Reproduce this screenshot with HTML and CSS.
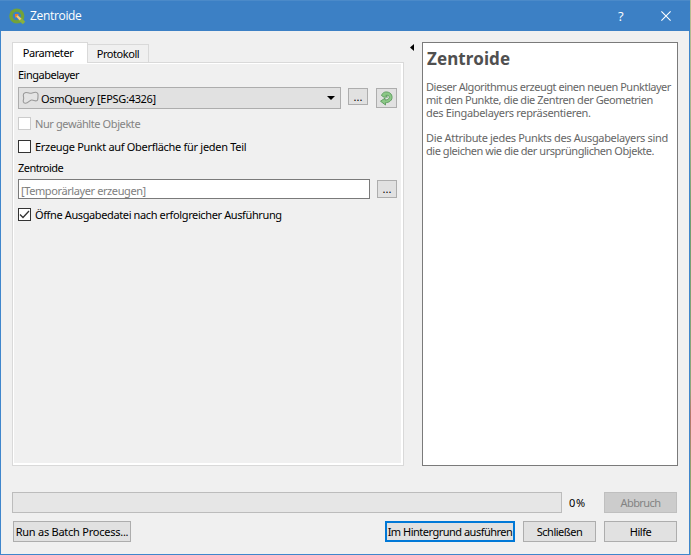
FILE: index.html
```html
<!DOCTYPE html>
<html lang="de">
<head>
<meta charset="utf-8">
<title>Zentroide</title>
<link rel="stylesheet" href="styles.css">
</head>
<body>
<div class="window">
  <header class="titlebar">
    <svg class="logo" width="17" height="17" viewBox="0 0 17 17">
      <circle cx="7.800" cy="8" r="5.900" fill="none" stroke="#72a23a" stroke-width="3.400"/>
      <path d="M10.500 10.500l4.500 4.500" stroke="#8ab13c" stroke-width="3.600"/>
      <path d="M7.500 7.500l4 4" stroke="#f3c77c" stroke-width="2.400"/>
      <path d="M6 6h4l-4 4z" fill="#ee7f22"/>
    </svg>
    <h1 class="caption">Zentroide</h1>
    <span class="question">?</span>
    <svg class="close" width="10" height="10" viewBox="0 0 10 10"><path d="M.4.4l9.2 9.2M9.6.4L.4 9.6" stroke="#fff" stroke-width="1.1"/></svg>
  </header>
  <main class="content">
    <section class="left">
      <nav class="tabs">
        <div class="tab active"><span class="t-param">Parameter</span></div>
        <div class="tab"><span class="t-prot">Protokoll</span></div>
      </nav>
      <div class="panel">
        <div class="label"><span class="t-input">Eingabelayer</span></div>
        <div class="row">
          <div class="combo">
            <svg width="17" height="14" viewBox="0 0 17 14"><path d="M3 1.800C4.500.800 6 2.300 8 2.300S12 1.200 13.500 1.300C15.800 1.500 16.300 3 16 5 15.800 7 16.300 9.300 14.500 9.800 12.500 10.200 11.500 8.700 9.500 9 7.500 9.300 6 12.500 3.300 12.200 1 12 1 10 1.500 8.500 2 7 1.500 6 1.300 4.500 1.200 3.300 1.800 2.300 3 1.800z" fill="#e4e4e4" stroke="#999" stroke-width="1.100"/></svg>
            <span class="t-combo">OsmQuery [EPSG:4326]</span>
            <svg class="arrow" width="8" height="4" viewBox="0 0 8 4"><path d="M0 0h8L4 4z"/></svg>
          </div>
          <div class="btn dots small">...</div>
          <div class="btn refresh">
            <svg width="15" height="16" viewBox="0 0 15 16"><path d="M2.500 5.500C3.500 2.300 6.500 1.300 9.500 2.300 13.500 3.600 14.200 8.800 11.300 11 10 12.200 8 12.700 6.500 12.700V15L1.500 11.200 6 8.200V10C8 10 10 9.300 10.300 7.500 10.500 5.500 8.500 4.800 6.800 5.500L8.500 7 5 7.200z" fill="#8cc886" stroke="#5a9a5c" stroke-width=".9"/></svg>
          </div>
        </div>
        <div class="check off"><i class="box"></i><span class="t-only">Nur gewählte Objekte</span></div>
        <div class="check second"><i class="box"></i><span class="t-point">Erzeuge Punkt auf Oberfläche für jeden Teil</span></div>
        <div class="label out"><span class="t-out">Zentroide</span></div>
        <div class="row">
          <div class="edit"><span class="t-edit">[Temporärlayer erzeugen]</span></div>
          <div class="btn dots">...</div>
        </div>
        <div class="check third"><i class="box"><svg width="11" height="11" viewBox="0 0 11 11"><path d="M1 5.500l3 3L10 2" fill="none" stroke="#333" stroke-width="1.3"/></svg></i><span class="t-open">Öffne Ausgabedatei nach erfolgreicher Ausführung</span></div>
      </div>
    </section>
    <div class="splitter"><svg width="4" height="7" viewBox="0 0 4 7"><path d="M4 0v7L0 3.500z"/></svg></div>
    <aside class="help">
      <h2><span class="t-head">Zentroide</span></h2>
      <p><span class="h1">Dieser Algorithmus erzeugt einen neuen Punktlayer</span><span class="h2">mit den Punkte, die die Zentren der Geometrien</span><span class="h3">des Eingabelayers repräsentieren.</span></p>
      <p><span class="h4">Die Attribute jedes Punkts des Ausgabelayers sind</span><span class="h5">die gleichen wie die der ursprünglichen Objekte.</span></p>
    </aside>
  </main>
  <div class="progress">
    <div class="bar"></div><span class="percent">0%</span>
    <div class="btn std disabled"><span class="t-abort">Abbruch</span></div>
  </div>
  <footer class="actions">
    <div class="btn batch"><span class="t-batch">Run as Batch Process...</span></div>
    <div class="btn primary"><span class="t-run">Im Hintergrund ausführen</span></div>
    <div class="btn std"><span class="t-close">Schließen</span></div>
    <div class="btn std"><span class="t-help">Hilfe</span></div>
  </footer>
</div>
</body>
</html>
```
FILE: styles.css
```css
* { box-sizing: border-box; }
body { margin: 0; width: 691px; height: 555px; overflow: hidden; background: linear-gradient(#b9bd92, #a8b58c 20%, #729d70 40%, #8fa77c 70%, #b87569 75%, #8fa36f 85%, #a6b27d); font: 11px/13px "Noto Sans", sans-serif; color: #000; }
span { white-space: nowrap; }
svg { display: block; flex: none; }
.window { width: 690px; height: 555px; border: 1px solid #3f86cc; border-top: 0; background: #f0f0f0; }
.titlebar { height: 31px; margin: 0 -1px; padding-left: 9px; display: flex; align-items: center; background: #3c80c5; border-top: 1px solid #4b8ac9; color: #fff; }
.logo { margin-right: 4px; }
.caption { margin: 0; width: 588px; font: 12px/16px "Open Sans", sans-serif; letter-spacing: -.33px; }
.question { width: 8px; margin-right: 35px; font: 13px/16px "Open Sans", sans-serif; }
.content { display: flex; height: 435px; padding: 11px 0 0 11px; }
.left { width: 392px; height: 424px; }
.tabs { display: flex; align-items: flex-end; height: 21px; position: relative; margin-bottom: -1px; }
.tab { width: 61px; height: 19px; padding-top: 2px; border: 1px solid #d9d9d9; border-left: 0; text-align: center; background: #f0f0f0; }
.tab.active { width: 76px; height: 21px; padding-top: 3px; padding-right: 4px; border-left: 1px solid #d9d9d9; border-bottom: 0; background: #fff; }
.panel { height: 404px; border: 1px solid #d9d9d9; box-shadow: inset 1px 1px #fff, inset -2px -2px #fff; padding: 5px 6px 0 5px; }
.label { height: 19px; }
.label.out { margin-top: 8px; height: 18px; }
.row { display: flex; }
.btn { border: 1px solid #adadad; background: #e1e1e1; height: 21px; display: flex; align-items: center; justify-content: center; }
.combo { width: 323px; height: 22px; border: 1px solid #adadad; background: #e1e1e1; display: flex; align-items: center; padding: 0 5px 0 3px; }
.combo span { margin-left: 2px; }
.arrow { margin-left: auto; }
.dots { width: 20px; height: 18px; margin: 1px 0 0 7px; align-items: flex-start; padding-top: 1px; letter-spacing: .1px; }
.small { height: 17px; }
.refresh { width: 21px; height: 20px; margin: 1px 0 0 8px; }
.check { display: flex; align-items: center; height: 13px; margin-top: 8px; }
.box { width: 13px; height: 13px; border: 1px solid #333; background: #fff; margin-right: 4px; flex: none; }
.off { color: #838383; }
.off .box { border-color: #ccc; }
.second { margin-top: 10px; }
.third { margin-top: 9px; }
.edit { width: 352px; height: 20px; border: 1px solid #7a7a7a; background: #fff; color: #808080; padding: 4px 0 0 2px; }
.splitter { width: 18px; padding: 2px 0 0 6px; }
.help { width: 256px; height: 424px; border: 1px solid #7a7a7a; background: #fff; color: #666; padding: 5px 0 0 3px; }
.help h2 { margin: 0 0 10px 1px; font: bold 17px/22px "Noto Sans", sans-serif; color: #505050; }
.help p { margin: 0 0 12px; }
.help p span { display: block; height: 13px; }
.t-head { letter-spacing: .1px; }
.progress { display: flex; height: 21px; margin: 26px 0 0 11px; align-items: center; }
.bar { width: 550px; height: 21px; border: 1px solid #bcbcbc; background: #e6e6e6; }
.percent { margin-left: 7px; width: 35px; letter-spacing: .8px; }
.std { width: 73px; }
.disabled { background: #ccc; border-color: #bfbfbf; color: #838383; }
.actions { display: flex; margin: 8px 0 0 12px; }
.batch { width: 118px; margin-right: 254px; }
.primary { width: 130px; margin-right: 8px; border: 2px solid #0078d7; }
.std + .std { margin-left: 8px; }
.t-param { letter-spacing: -.45px; }
.t-prot { letter-spacing: -.45px; }
.t-input { letter-spacing: -.5px; }
.t-combo { letter-spacing: -.3px; }
.t-only { letter-spacing: -.4px; }
.t-point { letter-spacing: -.3px; }
.t-out { letter-spacing: -.55px; }
.t-edit { letter-spacing: -.4px; }
.t-open { letter-spacing: -.38px; }
.h1 { letter-spacing: -.47px; }
.h2 { letter-spacing: -.45px; }
.h3 { letter-spacing: -.33px; }
.h4 { letter-spacing: -.34px; }
.h5 { letter-spacing: -.46px; }
.t-abort { letter-spacing: -.6px; }
.t-batch { letter-spacing: -.25px; }
.t-run { letter-spacing: -.5px; }
.t-close { letter-spacing: -.5px; }
.t-help { letter-spacing: -.5px; }
```
